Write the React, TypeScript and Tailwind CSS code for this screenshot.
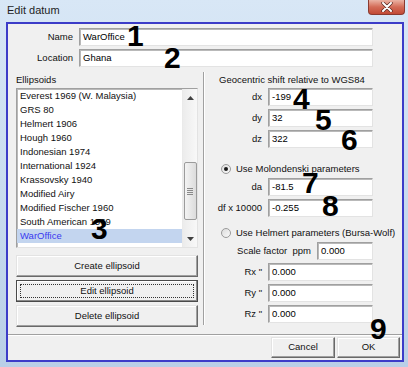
import React from "react";

const ellipsoids = [
  "Everest 1969 (W. Malaysia)",
  "GRS 80",
  "Helmert 1906",
  "Hough 1960",
  "Indonesian 1974",
  "International 1924",
  "Krassovsky 1940",
  "Modified Airy",
  "Modified Fischer 1960",
  "South American 1969",
  "WarOffice",
  "WGS 1972",
];

const sunken =
  "border border-t-[#a0a0a0] border-l-[#a0a0a0] border-r-[#e3e3e3] border-b-[#e3e3e3] shadow-[inset_1px_1px_0_#b9b9b9] bg-white";

const raised =
  "border border-t-[#e3e3e3] border-l-[#e3e3e3] border-r-[#696969] border-b-[#696969] shadow-[inset_-1px_-1px_0_#a0a0a0,inset_1px_1px_0_#ffffff] bg-[#f0f0f0]";

function Field({ value, w = "w-[105px]" }: { value: string; w?: string }) {
  return (
    <div className={`${sunken} ${w} h-[18px] flex items-center pl-[3px] text-black`}>
      {value}
    </div>
  );
}

function Row({ label, value }: { label: string; value: string }) {
  return (
    <div className="flex items-center gap-[6px] mt-[3px]">
      <div className="w-[57px] text-right whitespace-pre">{label}</div>
      <Field value={value} />
    </div>
  );
}

function Radio({ checked, label }: { checked?: boolean; label: string }) {
  return (
    <div className="flex items-center h-[12px] pl-[16px] gap-[5px]">
      <div className="w-[10px] h-[10px] rounded-full border border-[#9a9a9a] bg-gradient-to-br from-[#dcdcdc] to-[#fafafa] flex items-center justify-center">
        {checked && <div className="w-[4px] h-[4px] rounded-full bg-[#1a1a1a]" />}
      </div>
      <span>{label}</span>
    </div>
  );
}

function Num({ n, left, top }: { n: string; left: number; top: number }) {
  return (
    <div
      className="absolute text-[30px] leading-none font-bold text-black font-['Liberation_Sans',Arial,sans-serif]"
      style={{ left, top }}
    >
      {n}
    </div>
  );
}

export default function App() {
  return (
    <div className="relative w-[408px] h-[367px] overflow-hidden bg-gradient-to-b from-[#d8e7f6] via-[#c9dcef] to-[#b9cfe7] font-['Liberation_Sans',Arial,sans-serif] text-[9.5px] text-[#111]">
      {/* Title bar */}
      <div className="h-[22px] flex items-start justify-between">
        <div className="pl-[7px] pt-[4px] text-[11px] leading-[13px] text-[#1e1e1e]">Edit datum</div>
        <div className="mr-[3px] w-[37px] h-[15px] rounded-b-[4px] border border-t-0 border-[#8a3a30] bg-gradient-to-b from-[#eab3a5] via-[#d36b57] to-[#c24a36] flex items-center justify-center">
          <svg width="12" height="10" viewBox="0 0 12 10">
            <path d="M2 1 L10 9 M10 1 L2 9" stroke="#5a2a24" strokeWidth="3.4" strokeLinecap="round" />
            <path d="M2 1 L10 9 M10 1 L2 9" stroke="#ffffff" strokeWidth="2" strokeLinecap="round" />
          </svg>
        </div>
      </div>

      <div className="flex">
        <div className="w-[6px]" />
        {/* Client area */}
        <div className="w-[398px] h-[340px] border-2 border-[#3c3cc8] bg-[#f0f0f0] flex flex-col">
          {/* Name / Location */}
          <div className="flex items-center gap-[6px] mt-[4px]">
            <div className="w-[65px] text-right">Name</div>
            <Field value="WarOffice" w="w-[294px]" />
          </div>
          <div className="flex items-center gap-[6px] mt-[3px]">
            <div className="w-[65px] text-right">Location</div>
            <Field value="Ghana" w="w-[294px]" />
          </div>

          {/* Main */}
          <div className="flex mt-[5px]">
            {/* Left column */}
            <div className="w-[195px] pl-[8px] flex flex-col">
              <div className="mt-[2px] h-[12px] leading-[12px]">Ellipsoids</div>
              <div className={`${sunken} mt-[2px] w-[182px] h-[160px] flex overflow-hidden`}>
                <div className="flex-1 flex flex-col overflow-hidden">
                  {ellipsoids.map((e) => (
                    <div
                      key={e}
                      className={`h-[14px] shrink-0 leading-[14px] pl-[3px] ${
                        e === "WarOffice" ? "bg-[#c3d5ef] text-[#3a3af0]" : ""
                      }`}
                    >
                      {e}
                    </div>
                  ))}
                </div>
                {/* Scrollbar */}
                <div className="w-[15px] bg-gradient-to-r from-[#ececec] to-[#f8f8f8] border-l border-[#eaeaea] flex flex-col items-center">
                  <div className="h-[17px] flex items-center justify-center">
                    <svg width="7" height="4" viewBox="0 0 7 4">
                      <path d="M0 4 L3.5 0 L7 4 Z" fill="#404040" />
                    </svg>
                  </div>
                  <div className="mt-[56px] w-[13px] h-[58px] rounded-[2px] border border-[#9b9b9b] bg-gradient-to-r from-[#f3f3f3] to-[#dcdcdc] flex flex-col items-center justify-center gap-[1px]">
                    <div className="w-[6px] h-[1px] bg-[#8a8a8a]" />
                    <div className="w-[6px] h-[1px] bg-[#8a8a8a]" />
                    <div className="w-[6px] h-[1px] bg-[#8a8a8a]" />
                    <div className="w-[6px] h-[1px] bg-[#8a8a8a]" />
                  </div>
                  <div className="flex-1 flex items-end justify-center pb-[6px]">
                    <svg width="7" height="4" viewBox="0 0 7 4">
                      <path d="M0 0 L3.5 4 L7 0 Z" fill="#404040" />
                    </svg>
                  </div>
                </div>
              </div>
              <div className={`${raised} mt-[7px] w-[182px] h-[22px] flex items-center justify-center`}>
                Create ellipsoid
              </div>
              <div className="mt-[3px] w-[182px] h-[22px] border border-[#4a4a4a] bg-[#f0f0f0] shadow-[inset_-1px_-1px_0_#8a8a8a,inset_1px_1px_0_#ffffff] flex items-center justify-center p-[3px]">
                <div className="w-full h-full border border-dotted border-[#333] flex items-center justify-center">
                  Edit ellipsoid
                </div>
              </div>
              <div className={`${raised} mt-[3px] w-[182px] h-[22px] flex items-center justify-center`}>
                Delete ellipsoid
              </div>
            </div>

            {/* Divider */}
            <div className="w-[2px] h-[253px] border-l border-[#a0a0a0] bg-white" />

            {/* Right column */}
            <div className="flex-1 flex flex-col">
              <div className="mt-[2px] h-[12px] leading-[12px] pl-[14px]">Geocentric shift relative to WGS84</div>
              <div className="mt-[-1px]" />
              <Row label="dx" value="-199" />
              <Row label="dy" value="32" />
              <Row label="dz" value="322" />
              <div className="mt-[15px]" />
              <Radio checked label="Use Molondenski parameters" />
              <Row label="da" value="-81.5" />
              <Row label="df x 10000" value="-0.255" />
              <div className="mt-[10px]" />
              <Radio label="Use Helmert parameters (Bursa-Wolf)" />
              <div className="flex items-center gap-[6px] mt-[3px]">
                <div className="w-[106px] text-right whitespace-pre">{"Scale factor  ppm"}</div>
                <Field value="0.000" w="w-[56px]" />
              </div>
              <Row label={'Rx "'} value="0.000" />
              <Row label={'Ry "'} value="0.000" />
              <Row label={'Rz "'} value="0.000" />
            </div>
          </div>

          {/* Bottom */}
          <div className="mt-auto">
            <div className="h-[2px] border-t border-[#a0a0a0] bg-white" />
            <div className="flex justify-end gap-[2px] pr-[2px] mt-[1px] mb-[2px]">
              <div className={`${raised} w-[64px] h-[21px] flex items-center justify-center`}>Cancel</div>
              <div className={`${raised} w-[63px] h-[21px] flex items-center justify-center`}>OK</div>
            </div>
          </div>
        </div>
      </div>

      <Num n="1" left={127} top={21} />
      <Num n="2" left={164} top={43} />
      <Num n="3" left={91} top={214} />
      <Num n="4" left={293} top={84} />
      <Num n="5" left={315} top={105} />
      <Num n="6" left={341} top={125} />
      <Num n="7" left={302} top={168} />
      <Num n="8" left={322} top={191} />
      <Num n="9" left={370} top={314} />
    </div>
  );
}
